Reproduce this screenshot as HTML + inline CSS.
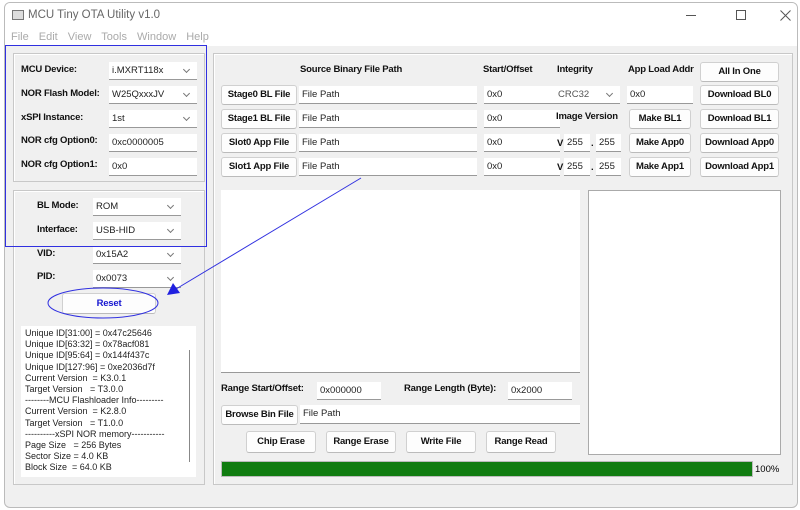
<!DOCTYPE html>
<html><head><style>
*{box-sizing:border-box;margin:0;padding:0}
body{width:800px;height:510px;background:#fff;font-family:"Liberation Sans",sans-serif;font-size:11px;position:relative;overflow:hidden}
.a{position:absolute}
.win{left:4px;top:2px;width:794px;height:506px;border:1px solid #bbb;border-radius:6px;background:#f0f0f0;overflow:hidden}
.grp{position:absolute;border:1px solid #c8c8c8;box-shadow:inset 1px 1px 0 #fff}
.lbl{position:absolute;font-weight:bold;font-size:9.5px;letter-spacing:-0.2px;color:#111}
.in{position:absolute;background:#fff;border-bottom:1px solid #999;font-size:9.5px;padding-left:3px;line-height:17px;height:18px;color:#222}
.cb:after{content:"";position:absolute;right:8px;top:5px;width:4px;height:4px;border-right:1px solid #777;border-bottom:1px solid #777;transform:rotate(45deg)}
.btn{position:absolute;background:#fdfdfd;border:1px solid #d0d0d0;border-bottom-color:#bbb;border-radius:3px;font-weight:bold;font-size:9.5px;letter-spacing:-0.2px;text-align:center;color:#111;white-space:nowrap}
.log div{font-size:9px;line-height:11.2px;color:#222;white-space:nowrap}
</style></head><body>
<div class="a win">
<div class="a" style="left:0;top:0;width:794px;height:43px;background:#fff"></div>
</div>
<div class="a" style="left:12px;top:10px;width:12px;height:10px;border:1px solid #777;background:#ddd"></div>
<div class="a" style="left:28px;top:9px;font-size:11.5px;color:#666">MCU Tiny OTA Utility v1.0</div>
<div class="a" style="left:686px;top:15px;width:10px;height:1px;background:#555"></div>
<div class="a" style="left:736px;top:10px;width:10px;height:10px;border:1px solid #555"></div>
<svg class="a" style="left:780px;top:10px" width="11" height="11"><path d="M0.5 0.5L10.5 10.5M10.5 0.5L0.5 10.5" stroke="#555" stroke-width="1"/></svg>
<div class="a" style="left:11px;top:31px;font-size:11px;color:#aaa;word-spacing:7px">File Edit View Tools Window Help</div>

<div class="grp" style="left:13px;top:53px;width:192px;height:129px"></div>
<div class="grp" style="left:13px;top:190px;width:192px;height:295px"></div>
<div class="grp" style="left:213px;top:53px;width:580px;height:432px"></div>

<div class="lbl" style="left:21px;top:64px">MCU Device:</div>
<div class="lbl" style="left:21px;top:88px">NOR Flash Model:</div>
<div class="lbl" style="left:21px;top:112px">xSPI Instance:</div>
<div class="lbl" style="left:21px;top:135px">NOR cfg Option0:</div>
<div class="lbl" style="left:21px;top:159px">NOR cfg Option1:</div>
<div class="in cb" style="left:109px;top:62px;width:88px">i.MXRT118x</div>
<div class="in cb" style="left:109px;top:86px;width:88px">W25QxxxJV</div>
<div class="in cb" style="left:109px;top:110px;width:88px">1st</div>
<div class="in" style="left:109px;top:134px;width:88px">0xc0000005</div>
<div class="in" style="left:109px;top:158px;width:88px">0x0</div>

<div class="lbl" style="left:37px;top:200px">BL Mode:</div>
<div class="lbl" style="left:37px;top:224px">Interface:</div>
<div class="lbl" style="left:37px;top:248px">VID:</div>
<div class="lbl" style="left:37px;top:271px">PID:</div>
<div class="in cb" style="left:93px;top:198px;width:88px">ROM</div>
<div class="in cb" style="left:93px;top:222px;width:88px">USB-HID</div>
<div class="in cb" style="left:93px;top:246px;width:88px">0x15A2</div>
<div class="in cb" style="left:93px;top:270px;width:88px">0x0073</div>
<div class="btn" style="left:62px;top:293px;width:94px;height:21px;line-height:19px;color:#1515d0">Reset</div>

<div class="a log" style="left:21px;top:326px;width:163px;height:151px;background:#fff;padding:2px 0 0 4px">
<div>Unique ID[31:00] = 0x47c25646</div><div>Unique ID[63:32] = 0x78acf081</div><div>Unique ID[95:64] = 0x144f437c</div><div>Unique ID[127:96] = 0xe2036d7f</div><div>Current Version &nbsp;= K3.0.1</div><div>Target Version &nbsp;&nbsp;= T3.0.0</div><div>--------MCU Flashloader Info---------</div><div>Current Version &nbsp;= K2.8.0</div><div>Target Version &nbsp;&nbsp;= T1.0.0</div><div>----------xSPI NOR memory-----------</div><div>Page Size &nbsp;&nbsp;= 256 Bytes</div><div>Sector Size = 4.0 KB</div><div>Block Size &nbsp;= 64.0 KB</div>
</div>
<div class="a" style="left:184px;top:326px;width:12px;height:151px;background:#fff"></div>
<div class="a" style="left:189px;top:350px;width:1px;height:112px;background:#888"></div>

<div class="lbl" style="left:300px;top:64px">Source Binary File Path</div>
<div class="lbl" style="left:483px;top:64px">Start/Offset</div>
<div class="lbl" style="left:557px;top:64px">Integrity</div>
<div class="lbl" style="left:628px;top:64px">App Load Addr</div>
<div class="btn" style="left:700px;top:62px;width:79px;height:20px;line-height:18px">All In One</div>

<div class="btn" style="left:221px;top:85px;width:76px;height:20px;line-height:18px">Stage0 BL File</div>
<div class="btn" style="left:221px;top:109px;width:76px;height:20px;line-height:18px">Stage1 BL File</div>
<div class="btn" style="left:221px;top:133px;width:76px;height:20px;line-height:18px">Slot0 App File</div>
<div class="btn" style="left:221px;top:157px;width:76px;height:20px;line-height:18px">Slot1 App File</div>
<div class="in" style="left:299px;top:86px;width:178px">File Path</div>
<div class="in" style="left:299px;top:110px;width:178px">File Path</div>
<div class="in" style="left:299px;top:134px;width:178px">File Path</div>
<div class="in" style="left:299px;top:158px;width:178px">File Path</div>
<div class="in" style="left:484px;top:86px;width:76px">0x0</div>
<div class="in" style="left:484px;top:110px;width:76px">0x0</div>
<div class="in" style="left:484px;top:134px;width:76px">0x0</div>
<div class="in" style="left:484px;top:158px;width:76px">0x0</div>
<div class="in cb" style="left:555px;top:86px;width:65px;color:#555">CRC32</div>
<div class="in" style="left:627px;top:86px;width:66px">0x0</div>
<div class="lbl" style="left:556px;top:111px">Image Version</div>
<div class="lbl" style="left:557px;top:138px">V</div>
<div class="lbl" style="left:557px;top:162px">V</div>
<div class="in" style="left:564px;top:134px;width:26px">255</div>
<div class="in" style="left:596px;top:134px;width:25px">255</div>
<div class="in" style="left:564px;top:158px;width:26px">255</div>
<div class="in" style="left:596px;top:158px;width:25px">255</div>
<div class="lbl" style="left:591px;top:138px">.</div>
<div class="lbl" style="left:591px;top:162px">.</div>
<div class="btn" style="left:629px;top:109px;width:62px;height:20px;line-height:18px">Make BL1</div>
<div class="btn" style="left:629px;top:133px;width:62px;height:20px;line-height:18px">Make App0</div>
<div class="btn" style="left:629px;top:157px;width:62px;height:20px;line-height:18px">Make App1</div>
<div class="btn" style="left:700px;top:85px;width:79px;height:20px;line-height:18px">Download BL0</div>
<div class="btn" style="left:700px;top:109px;width:79px;height:20px;line-height:18px">Download BL1</div>
<div class="btn" style="left:700px;top:133px;width:79px;height:20px;line-height:18px">Download App0</div>
<div class="btn" style="left:700px;top:157px;width:79px;height:20px;line-height:18px">Download App1</div>

<div class="a" style="left:221px;top:190px;width:359px;height:183px;background:#fff;border-bottom:1px solid #999"></div>
<div class="a" style="left:588px;top:190px;width:193px;height:265px;background:#fff;border:1px solid #aaa"></div>

<div class="lbl" style="left:221px;top:383px">Range Start/Offset:</div>
<div class="in" style="left:317px;top:382px;width:64px">0x000000</div>
<div class="lbl" style="left:404px;top:383px">Range Length (Byte):</div>
<div class="in" style="left:508px;top:382px;width:64px">0x2000</div>
<div class="btn" style="left:221px;top:405px;width:77px;height:20px;line-height:18px">Browse Bin File</div>
<div class="in" style="left:300px;top:405px;width:280px;height:19px;line-height:18px">File Path</div>
<div class="btn" style="left:246px;top:431px;width:70px;height:22px;line-height:20px">Chip Erase</div>
<div class="btn" style="left:326px;top:431px;width:70px;height:22px;line-height:20px">Range Erase</div>
<div class="btn" style="left:406px;top:431px;width:70px;height:22px;line-height:20px">Write File</div>
<div class="btn" style="left:486px;top:431px;width:70px;height:22px;line-height:20px">Range Read</div>
<div class="a" style="left:221px;top:461px;width:532px;height:16px;background:#107c10;border:1px solid #bbb"></div>
<div class="a" style="left:755px;top:464px;font-size:9.5px">100%</div>

<svg class="a" style="left:0;top:0" width="800" height="510">
<rect x="5.5" y="45.5" width="201" height="201" fill="none" stroke="#3030e0" stroke-width="1"/>
<ellipse cx="103" cy="303" rx="55" ry="15" fill="none" stroke="#3030e0" stroke-width="1"/>
<line x1="361" y1="178" x2="176" y2="289" stroke="#3030e0" stroke-width="1"/>
<polygon points="167,295 173,283 180,293" fill="#2020e0"/>
</svg>
</body></html>
